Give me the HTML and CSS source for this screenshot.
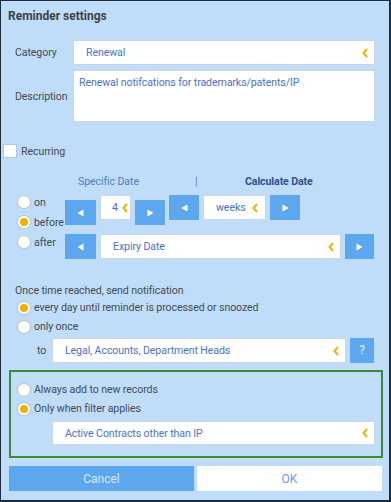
FILE: index.html
```html
<!DOCTYPE html>
<html lang="en">
<head>
    <meta charset="UTF-8">
    <meta name="viewport" content="width=device-width, initial-scale=1.0">
    <title>Reminder settings</title>
    <link rel="stylesheet" href="styles.css">
</head>
<body>

    <div class="dialog">

        <div class="title">Reminder settings</div>

        <div class="form-row cat-row">
            <label class="row-label">Category</label>
            <div class="select">
                <span>Renewal</span>
                <svg class="chev" width="6" height="10" viewBox="0 0 6 10"><path d="M5 1 L1.5 5 L5 9" /></svg>
            </div>
        </div>

        <div class="form-row desc-row">
            <label class="row-label">Description</label>
            <div class="textarea">Renewal notifcations for trademarks/patents/IP</div>
        </div>

        <div class="recurring">
            <span class="checkbox"></span>
            <span>Recurring</span>
        </div>

        <div class="date-tabs">
            <span class="tab-specific">Specific Date</span>
            <span class="tab-sep">|</span>
            <span class="tab-calc">Calculate Date</span>
        </div>

        <div class="date-area">
            <div class="radio-col">
                <div class="radio-line"><span class="radio"></span>on</div>
                <div class="radio-line"><span class="radio checked"></span>before</div>
                <div class="radio-line"><span class="radio"></span>after</div>
            </div>
            <div class="date-rows">
                <div class="btn-row">
                    <span class="arrow-btn low w31">
                        <svg width="7" height="8" viewBox="0 0 7 8"><path d="M0.5 4 L6.5 0.5 L6.5 7.5Z" /></svg>
                    </span>
                    <div class="select num-box">
                        <span>4</span>
                        <svg class="chev" width="6" height="10" viewBox="0 0 6 10"><path d="M5 1 L1.5 5 L5 9" /></svg>
                    </div>
                    <span class="arrow-btn low">
                        <svg width="7" height="8" viewBox="0 0 7 8"><path d="M6.5 4 L0.5 0.5 L0.5 7.5Z" /></svg>
                    </span>
                    <span class="arrow-btn">
                        <svg width="7" height="8" viewBox="0 0 7 8"><path d="M0.5 4 L6.5 0.5 L6.5 7.5Z" /></svg>
                    </span>
                    <div class="select unit-box">
                        <span>weeks</span>
                        <svg class="chev" width="6" height="10" viewBox="0 0 6 10"><path d="M5 1 L1.5 5 L5 9" /></svg>
                    </div>
                    <span class="arrow-btn">
                        <svg width="7" height="8" viewBox="0 0 7 8"><path d="M6.5 4 L0.5 0.5 L0.5 7.5Z" /></svg>
                    </span>
                </div>
                <div class="btn-row second">
                    <span class="arrow-btn w31">
                        <svg width="7" height="8" viewBox="0 0 7 8"><path d="M0.5 4 L6.5 0.5 L6.5 7.5Z" /></svg>
                    </span>
                    <div class="select grow">
                        <span>Expiry Date</span>
                        <svg class="chev" width="6" height="10" viewBox="0 0 6 10"><path d="M5 1 L1.5 5 L5 9" /></svg>
                    </div>
                    <span class="arrow-btn w29">
                        <svg width="7" height="8" viewBox="0 0 7 8"><path d="M6.5 4 L0.5 0.5 L0.5 7.5Z" /></svg>
                    </span>
                </div>
            </div>
        </div>

        <div class="notify">
            <div class="notify-head">Once time reached, send notification</div>
            <div class="radio-line"><span class="radio checked"></span>every day until reminder is processed or snoozed</div>
            <div class="radio-line"><span class="radio"></span>only once</div>
            <div class="to-row">
                <span class="to-label">to</span>
                <div class="select grow">
                    <span>Legal, Accounts, Department Heads</span>
                    <svg class="chev" width="6" height="10" viewBox="0 0 6 10"><path d="M5 1 L1.5 5 L5 9" /></svg>
                </div>
                <span class="help-btn">?</span>
            </div>
        </div>

        <div class="filter-box">
            <div class="radio-line"><span class="radio"></span>Always add to new records</div>
            <div class="radio-line"><span class="radio checked"></span>Only when filter applies</div>
            <div class="select filter-select">
                <span>Active Contracts other than IP</span>
                <svg class="chev" width="6" height="10" viewBox="0 0 6 10"><path d="M5 1 L1.5 5 L5 9" /></svg>
            </div>
        </div>

        <div class="actions">
            <button class="btn btn-cancel">Cancel</button>
            <button class="btn btn-ok">OK</button>
        </div>

    </div>

</body>
</html>
```

FILE: styles.css
```css
body {
    margin: 0;
    font-family: Roboto, "Liberation Sans", Arial, sans-serif;
    font-size: 10.6px;
    letter-spacing: -0.1px;
    color: #454b52;
}
.dialog {
    width: 391px;
    height: 502px;
    box-sizing: border-box;
    background: #bfdcf9;
    border: 1px solid #1d2a38;
    border-right-width: 2px;
    border-bottom-width: 2px;
}
.title {
    padding: 8px 0 0 7px;
    line-height: 14px;
    font-size: 12px;
    font-weight: bold;
    letter-spacing: 0;
    color: #3b4148;
}
.form-row {
    display: flex;
    align-items: center;
    padding-left: 14px;
}
.cat-row {
    margin-top: 17px;
}
.desc-row {
    margin-top: 5px;
}
.row-label {
    width: 58px;
    flex-shrink: 0;
}
.select {
    display: flex;
    align-items: center;
    justify-content: space-between;
    box-sizing: border-box;
    height: 25px;
    padding: 0 6px 0 12px;
    background: white;
    border: 1px solid #c9d5e2;
    color: #4a72c6;
}
.cat-row .select {
    width: 302px;
}
.chev {
    flex-shrink: 0;
}
.chev path {
    fill: none;
    stroke: #f0b400;
    stroke-width: 2;
}
.textarea {
    box-sizing: border-box;
    width: 302px;
    height: 52px;
    padding: 5px 5px;
    background: white;
    border: 1px solid #c9d5e2;
    color: #4a72c6;
}
.recurring {
    display: flex;
    align-items: center;
    gap: 4px;
    margin-top: 22px;
    padding-left: 2px;
    height: 14px;
}
.checkbox {
    width: 14px;
    height: 14px;
    box-sizing: border-box;
    background: white;
    border: 1px solid #b8c6d6;
}
.date-tabs {
    display: flex;
    margin-top: 17px;
    padding-left: 77px;
    line-height: 14px;
}
.tab-specific {
    width: 117px;
    color: #4d7cc9;
}
.tab-sep {
    width: 50px;
    color: #4d7cc9;
}
.tab-calc {
    color: #2f4f8f;
    font-weight: bold;
}
.date-area {
    display: flex;
    margin-top: 6px;
    padding-left: 16px;
}
.radio-col {
    width: 48px;
    flex-shrink: 0;
    margin-top: -3px;
}
.radio-line {
    display: flex;
    align-items: center;
    gap: 3px;
    height: 19px;
    padding-left: 16px;
}
.radio-col .radio-line {
    height: 20px;
    padding-left: 0;
}
.radio {
    position: relative;
    width: 14px;
    height: 14px;
    flex-shrink: 0;
    box-sizing: border-box;
    border-radius: 50%;
    background: white;
    border: 1px solid #b3c1d1;
}
.radio.checked::after {
    content: "";
    position: absolute;
    left: 2px;
    top: 2px;
    width: 8px;
    height: 8px;
    border-radius: 50%;
    background: #f0b000;
}
.date-rows {
    flex: 1;
    padding-right: 15px;
}
.btn-row {
    display: flex;
    align-items: flex-start;
    gap: 4px;
}
.btn-row.second {
    margin-top: 9px;
}
.arrow-btn {
    display: flex;
    align-items: center;
    justify-content: center;
    width: 30px;
    height: 25px;
    flex-shrink: 0;
    background: #5ca7ee;
}
.arrow-btn path {
    fill: white;
}
.arrow-btn.low {
    margin-top: 5px;
}
.w31 {
    width: 31px;
}
.w29 {
    width: 29px;
}
.num-box {
    width: 31px;
    flex-shrink: 0;
    padding: 0 2px 0 11px;
}
.unit-box {
    width: 63px;
    flex-shrink: 0;
    padding: 0 7px 0 12px;
}
.grow {
    flex: 1;
}
.notify {
    margin-top: 25px;
}
.notify-head {
    padding-left: 14px;
    line-height: 14px;
}
.to-row {
    display: flex;
    align-items: center;
    gap: 4px;
    margin-top: 2px;
    padding: 0 15px 0 36px;
}
.to-label {
    width: 11px;
}
.help-btn {
    width: 24px;
    height: 25px;
    line-height: 25px;
    text-align: center;
    background: #5ca7ee;
    color: #e6f0fc;
    font-size: 12px;
}
.filter-box {
    margin: 7px 6px 0 8px;
    padding: 8px 6px 11px 0;
    border: 2px solid #3a8a3a;
}
.filter-box .radio-line {
    padding-left: 6px;
}
.filter-select {
    margin: 3px 0 0 41px;
    height: 24px;
}
.actions {
    display: flex;
    gap: 3px;
    margin: 8px 7px 0 8px;
}
.btn {
    flex: 1;
    height: 25px;
    border: none;
    font-family: inherit;
    font-size: 12px;
}
.btn-cancel {
    background: #5ca7ee;
    color: #d9e8fb;
}
.btn-ok {
    background: white;
    color: #6d9de2;
}
```
